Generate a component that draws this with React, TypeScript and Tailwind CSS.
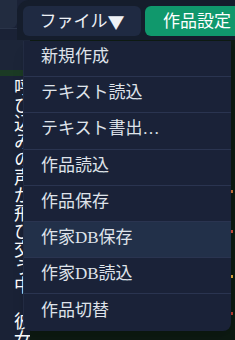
import React from 'react';

const items = [
  '新規作成',
  'テキスト読込',
  'テキスト書出…',
  '作品読込',
  '作品保存',
  '作家DB保存',
  '作家DB読込',
  '作品切替',
];

export default function App() {
  return (
    <div
      className="relative w-[235px] h-[340px] overflow-hidden bg-[#1a2236] text-[#e5e7eb]"
      style={{ fontFamily: '"Liberation Serif", "Noto Sans CJK JP", serif' }}
    >
      {/* toolbar */}
      <div className="flex h-[40px]">
        <div className="w-[17px] shrink-0 flex flex-col">
          <div className="h-[28px] bg-[#222c40] rounded-br-md" />
          <div className="flex-1 border-t border-[#2a3449]" />
        </div>
        <div className="flex-1 flex gap-[4px] pl-[6px] pt-[6px] pb-[4px] bg-[#151d2c] rounded-tl-xl overflow-hidden">
          <button className="w-[118px] h-[30px] shrink-0 rounded-md bg-[#1f2a42] text-[17px] leading-none text-[#eef1f6] flex items-center justify-center">
            ファイル
            <span className="text-[17px]" style={{ fontFamily: '"Noto Sans CJK JP", sans-serif' }}>
              ▼
            </span>
          </button>
          <button className="w-[110px] h-[30px] shrink-0 rounded-md bg-[#10986c] text-[17px] leading-none text-white flex items-center pl-[18px]">
            作品設定
          </button>
        </div>
      </div>

      {/* body behind the menu */}
      <div className="flex h-[300px]">
        <div className="w-[30px] shrink-0 flex flex-col overflow-hidden">
          <div className="h-[30px] shrink-0 bg-[#1c2538]" />
          <div className="h-[6px] shrink-0 bg-[#1b3a24]" />
          <div
            className="pl-[4px] pt-[2px] text-[18px] leading-[18px] text-white whitespace-nowrap"
            style={{ writingMode: 'vertical-rl' }}
          >
            呼び込みの声が飛び交う中、彼女
          </div>
        </div>
        <div className="flex-1 bg-[#0d1a12] relative">
          <div className="absolute right-[2px] top-[150px] w-[2px] h-[3px] bg-[#c2703a]" />
          <div className="absolute right-[2px] top-[190px] w-[2px] h-[3px] bg-[#c84a3a]" />
          <div className="absolute right-[2px] top-[235px] w-[2px] h-[3px] bg-[#d9a23a]" />
          <div className="absolute right-[2px] top-[272px] w-[2px] h-[3px] bg-[#b43a30]" />
        </div>
      </div>

      {/* dropdown menu */}
      <div className="absolute left-[23px] top-[41px] w-[208px] bg-[#1a2238] rounded-b-lg border-l border-[#222b42] shadow-lg overflow-hidden">
        {items.map((label, i) => (
          <div
            key={label}
            className={
              'h-[36.2px] flex items-center pl-[17px] pb-[4px] text-[17px] leading-none text-[#dfe3ea] ' +
              (i < items.length - 1 ? 'border-b border-[#2a3450] ' : '') +
              (i === 5 ? 'bg-[#223049]' : '')
            }
          >
            {label}
          </div>
        ))}
      </div>
    </div>
  );
}
